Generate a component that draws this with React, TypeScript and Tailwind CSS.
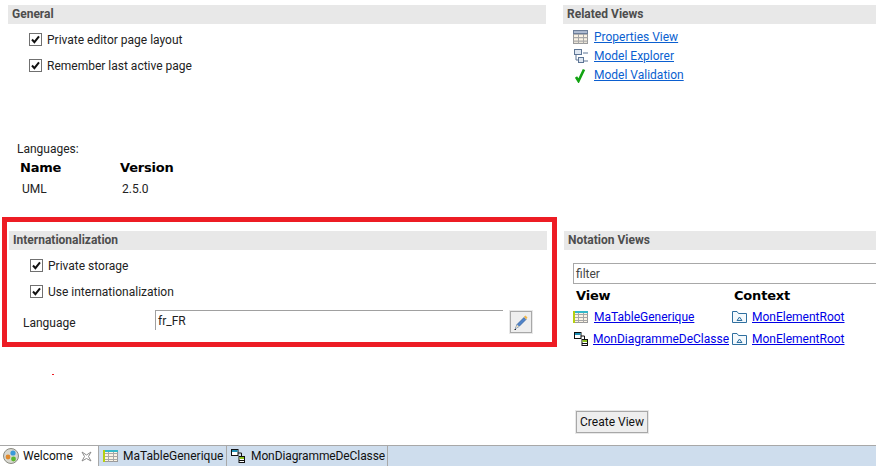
const ui = { fontFamily: "Roboto, sans-serif" };

function Check({ label }: { label: string }) {
  return (
    <label className="flex items-center h-[13px] text-[12px] text-[#222]">
      <span className="w-[13px] h-[13px] border border-[#707070] bg-white flex items-center justify-center mr-[5px]">
        <svg width="9" height="9" viewBox="0 0 9 9">
          <path d="M1 4.5 L3.4 7.2 L8 1.4" fill="none" stroke="#111" strokeWidth="2" />
        </svg>
      </span>
      {label}
    </label>
  );
}

function Header({ title }: { title: string }) {
  return (
    <div className="h-[19px] bg-[#e8e8e8] flex items-center text-[12px] font-bold text-[#4d4d4d] pl-[4px] pb-[1px]">
      {title}
    </div>
  );
}

function TableIcon({ color, h = 12 }: { color?: boolean; h?: number }) {
  return (
    <svg width="15" height={h} viewBox="0 0 15 12" preserveAspectRatio="none" className="shrink-0">
      <rect x="0.5" y="0.5" width="14" height="11" fill="#fbf3e4" stroke="#9a9a9a" />
      <path d="M0.5 3.5H14.5M0.5 6.5H14.5M0.5 9.5H14.5M5.5 0.5V11.5M10.5 0.5V11.5" stroke="#a8a8a8" fill="none" />
      {color ? (
        <>
          <rect x="0" y="0" width="15" height="2" fill="#35b8c9" />
          <rect x="0" y="0" width="2" height="12" fill="#b5cf10" />
        </>
      ) : (
        <rect x="0.5" y="0.5" width="14" height="2.5" fill="#b8c4d8" stroke="#6e7f99" />
      )}
    </svg>
  );
}

function DiagramIcon() {
  return (
    <svg width="14" height="14" viewBox="0 0 14 14" className="shrink-0">
      <path d="M7 4H10.5V7" fill="none" stroke="#111" />
      <rect x="0.5" y="0.5" width="6.5" height="6" fill="#fff" stroke="#111" />
      <rect x="1" y="1" width="5.5" height="2" fill="#1b8fb5" />
      <rect x="8" y="7.5" width="5.5" height="6" fill="#fff" stroke="#111" />
      <rect x="8.5" y="8" width="4.5" height="2" fill="#8bc21c" />
      <path d="M8 11.5H13.5" stroke="#111" />
    </svg>
  );
}

function FolderIcon() {
  return (
    <svg width="15" height="12" viewBox="0 0 15 12" className="shrink-0">
      <path d="M0.5 11.5V0.5H5L6.5 2.5H14.5V11.5Z" fill="#f4f9fc" stroke="#2f6f9f" />
      <path d="M5 9.5L7.5 6L10 9.5Z" fill="#dcebf5" stroke="#2f6f9f" />
    </svg>
  );
}

function TextLink({ children, color = "text-[#0b5fd0]" }: { children: string; color?: string }) {
  return <a className={`${color} underline text-[12px] leading-[14px]`}>{children}</a>;
}

function ColHead({ children, className }: { children: string; className?: string }) {
  return (
    <span className={`font-bold text-[13px] leading-[16px] tracking-[-0.2px] text-black ${className ?? ""}`} style={{ fontFamily: "'DejaVu Sans', sans-serif" }}>
      {children}
    </span>
  );
}

export default function App() {
  return (
    <div className="relative w-[876px] h-[466px] bg-white overflow-hidden flex flex-col" style={ui}>
      <div className="flex-1 flex pt-[5px]">
        <div className="w-[548px] shrink-0 pl-[8px] flex flex-col">
          <div className="w-[538px]">
            <Header title="General" />
          </div>
          <div className="pl-[21px] pt-[9px] flex flex-col gap-[13px]">
            <Check label="Private editor page layout" />
            <Check label="Remember last active page" />
          </div>
          <div className="mt-[70px] pl-[9px] text-[12px] leading-[14px] text-[#222]">Languages:</div>
          <div className="mt-[4px] pl-[12px] flex">
            <ColHead className="w-[100px]">Name</ColHead>
            <ColHead>Version</ColHead>
          </div>
          <div className="mt-[6px] pl-[14px] flex text-[12px] leading-[14px] text-[#222]">
            <span className="w-[100px]">UML</span>
            <span>2.5.0</span>
          </div>
          <div className="mt-[35px] ml-[1px] w-[538px]">
            <Header title="Internationalization" />
          </div>
          <div className="pl-[22px] pt-[9px] flex flex-col gap-[13px]">
            <Check label="Private storage" />
            <Check label="Use internationalization" />
          </div>
          <div className="mt-[12px] pl-[15px] flex items-start">
            <span className="w-[132px] pt-[6px] text-[12px] leading-[14px] text-[#222]">Language</span>
            <div className="w-[348px] h-[20px] border-t border-l border-[#a0a0a0] pl-[2px] pt-[3px] text-[12px] leading-[14px] text-[#222]">
              fr_FR
            </div>
            <button className="ml-[7px] mt-[1px] w-[22px] h-[22px] border border-[#a8a8a8] bg-[#eeeeee] outline outline-1 outline-[#e8e8e8] flex items-center justify-center">
              <svg width="14" height="15" viewBox="0 0 14 15">
                <path d="M1.5 13.5L3 9.5L10 2.5L12 4.5L5 11.5Z" fill="#4f83c9" stroke="#2d5a99" strokeWidth="0.7" />
                <path d="M10 1.5L11.5 0.5L13.5 2.5L12 4.5Z" fill="#f0b64a" />
                <path d="M1.5 13.5L3 9.5L5 11.5Z" fill="#f2e2c0" />
                <path d="M0.5 14.5H2" stroke="#222" />
              </svg>
            </button>
          </div>
        </div>

        <div className="flex-1 min-w-0 pl-[15px] flex flex-col">
          <Header title="Related Views" />
          <div className="pl-[10px] pt-[6px] flex flex-col gap-[5px]">
            <div className="flex items-center gap-[6px] h-[14px]">
              <TableIcon h={14} />
              <TextLink>Properties View</TextLink>
            </div>
            <div className="flex items-center gap-[6px] h-[14px]">
              <svg width="15" height="14" viewBox="0 0 15 14" className="shrink-0">
                <path d="M3 6V11H5M10 4H15M10 12H15" fill="none" stroke="#5d7595" />
                <rect x="1.5" y="0.5" width="7" height="5" fill="#dfe7f1" stroke="#5d7595" />
                <rect x="5.5" y="8.5" width="5" height="5" fill="#dfe7f1" stroke="#5d7595" />
              </svg>
              <TextLink>Model Explorer</TextLink>
            </div>
            <div className="flex items-center gap-[6px] h-[14px]">
              <svg width="15" height="15" viewBox="0 0 15 15" className="shrink-0">
                <path d="M3 9L5.5 13L11 1.5" fill="none" stroke="#12a312" strokeWidth="2.6" />
              </svg>
              <TextLink>Model Validation</TextLink>
            </div>
          </div>
          <div className="mt-[149px] ml-[1px]">
            <Header title="Notation Views" />
          </div>
          <div className="ml-[10px] mt-[13px] h-[21px] border border-r-0 border-[#a8a8a8] pl-[2px] text-[12px] leading-[21px] text-[#444]">
            filter
          </div>
          <div className="ml-[13px] mt-[4px] flex h-[16px]">
            <ColHead className="w-[158px]">View</ColHead>
            <ColHead>Context</ColHead>
          </div>
          <div className="ml-[10px] mt-[6px] flex items-center h-[14px]">
            <div className="w-[159px] flex items-center gap-[6px]">
              <TableIcon color />
              <TextLink color="text-[#0000e6]">MaTableGenerique</TextLink>
            </div>
            <div className="flex items-center gap-[5px]">
              <FolderIcon />
              <TextLink color="text-[#0000e6]">MonElementRoot</TextLink>
            </div>
          </div>
          <div className="ml-[10px] mt-[8px] flex items-center h-[14px]">
            <div className="w-[159px] pl-[1px] flex items-center gap-[5px]">
              <DiagramIcon />
              <TextLink color="text-[#0000e6]">MonDiagrammeDeClasse</TextLink>
            </div>
            <div className="flex items-center gap-[5px]">
              <FolderIcon />
              <TextLink color="text-[#0000e6]">MonElementRoot</TextLink>
            </div>
          </div>
          <button className="ml-[13px] mt-[65px] w-[72px] h-[22px] border border-[#a8a8a8] bg-[#eeeeee] text-[12px] text-[#111] outline outline-1 outline-[#e8e8e8]">
            Create View
          </button>
        </div>
      </div>

      <div className="h-[21px] border-t border-[#a8a8a8] bg-[#cedded] flex items-stretch text-[12px] text-[#111]">
        <div className="w-[98px] bg-white flex items-center pl-[3px] gap-[4px]">
          <svg width="16" height="16" viewBox="0 0 16 16" className="shrink-0">
            <circle cx="8" cy="8" r="7.5" fill="#d8d8d0" stroke="#8a8a80" />
            <circle cx="10" cy="5" r="2.6" fill="#3a9ad9" />
            <circle cx="5" cy="9" r="2.4" fill="#e08a2e" />
            <circle cx="10.5" cy="11" r="2.4" fill="#5cb82e" />
          </svg>
          <span>Welcome</span>
          <svg width="11" height="11" viewBox="0 0 11 11" className="ml-[4px] shrink-0">
            <path d="M1 1L5.5 4L10 1L7.5 5.5L10 10L5.5 7.5L1 10L3.5 5.5Z" fill="#fff" stroke="#8c8c8c" />
          </svg>
        </div>
        <div className="w-[128px] border-l border-[#a8a8a8] flex items-center pl-[4px] gap-[5px]">
          <TableIcon color />
          <span>MaTableGenerique</span>
        </div>
        <div className="w-[162px] border-x border-[#a8a8a8] flex items-center pl-[4px] gap-[6px] tracking-[-0.1px]">
          <DiagramIcon />
          <span>MonDiagrammeDeClasse</span>
        </div>
      </div>

      {/* annotation over the screenshot */}
      <div className="absolute left-[2px] top-[217px] w-[555px] h-[130px] border-[5px] border-[#ed1c24] pointer-events-none" />
      <div className="absolute left-[52px] top-[374px] w-[2px] h-[1px] bg-[#ed1c24]" />
    </div>
  );
}
